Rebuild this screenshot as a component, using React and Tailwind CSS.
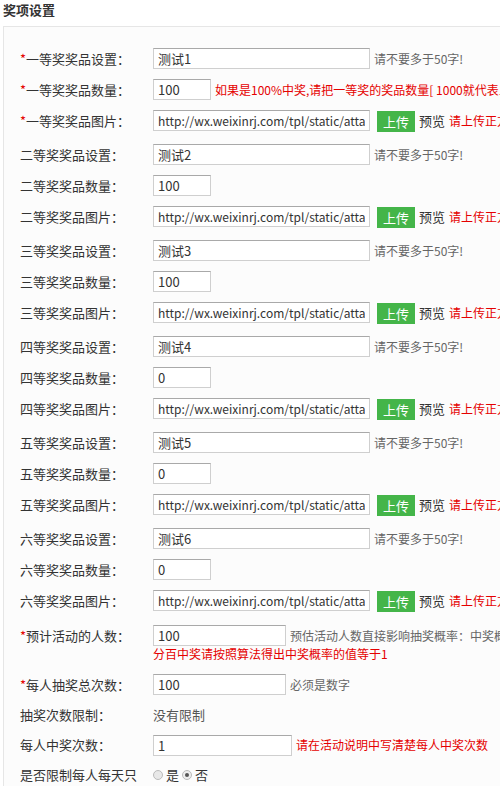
import React from "react";

const FONT = { fontFamily: '"Noto Sans CJK SC", "Open Sans", sans-serif' };

function Label({ req, children }) {
  return (
    <div className="w-[149px] shrink-0 pl-[16px] text-[13px] text-[#333] whitespace-nowrap">
      {req && <span className="text-[#e50000]">*</span>}
      {children}
    </div>
  );
}

function TextInput({ value, w }) {
  return (
    <input
      readOnly
      value={value}
      className={`${w} h-[21px] shrink-0 border border-[#cfcfcf] border-t-[#a9a9a9] bg-white px-[4px] text-[13px] text-[#333] outline-none`}
      style={FONT}
    />
  );
}

function Row({ children, h = "h-[31px]", extra = "" }) {
  return <div className={`flex items-center ${h} ${extra}`}>{children}</div>;
}

const prizes = [
  { n: "一", name: "测试1", count: "100", req: true },
  { n: "二", name: "测试2", count: "100" },
  { n: "三", name: "测试3", count: "100" },
  { n: "四", name: "测试4", count: "0" },
  { n: "五", name: "测试5", count: "0" },
  { n: "六", name: "测试6", count: "0" },
];

const URL = "http://wx.weixinrj.com/tpl/static/attachment/images/prize.jpg";

export default function App() {
  return (
    <div className="w-[500px] h-[786px] overflow-hidden bg-white" style={FONT}>
      <div className="h-[26px] pl-[3px] pt-[1px] text-[13px] font-bold text-[#333] leading-[18px]">
        奖项设置
      </div>
      <div className="ml-[3px] w-[520px] border border-[#e6e6e6] bg-[#fcfcfc] pt-[16px] pb-[40px]">
        {prizes.map((p) => (
          <React.Fragment key={p.n}>
            <Row>
              <Label req={p.req}>{p.n}等奖奖品设置：</Label>
              <TextInput value={p.name} w="w-[217px]" />
              <span className="ml-[4px] text-[12px] text-[#666] whitespace-nowrap">请不要多于50字!</span>
            </Row>
            <Row>
              <Label req={p.req}>{p.n}等奖奖品数量：</Label>
              <TextInput value={p.count} w="w-[58px]" />
              {p.req && (
                <span className="ml-[4px] text-[12px] text-[#e50000] whitespace-nowrap">
                  如果是100%中奖,请把一等奖的奖品数量[ 1000就代表100%中奖 ]
                </span>
              )}
            </Row>
            <Row extra="mb-[3px]">
              <Label req={p.req}>{p.n}等奖奖品图片：</Label>
              <input
                readOnly
                value={URL}
                className="w-[217px] h-[21px] shrink-0 border border-[#cfcfcf] border-t-[#a9a9a9] bg-white px-[4px] text-[12px] text-[#333] outline-none"
                style={FONT}
              />
              <span className="ml-[7px] mt-[2px] h-[21px] w-[38px] shrink-0 bg-[#44b549] text-center text-[13px] leading-[21px] text-white">
                上传
              </span>
              <span className="ml-[4px] text-[13px] text-[#333] whitespace-nowrap">预览</span>
              <span className="ml-[4px] text-[12px] text-[#e50000] whitespace-nowrap">请上传正方形图片</span>
            </Row>
          </React.Fragment>
        ))}
        <div className="flex h-[50px] pt-[6px]">
          <div className="pt-[1px]">
            <Label req>预计活动的人数：</Label>
          </div>
          <div className="flex flex-col">
            <div className="flex items-center">
              <TextInput value="100" w="w-[133px]" />
              <span className="ml-[4px] text-[12px] text-[#666] whitespace-nowrap">
                预估活动人数直接影响抽奖概率：中奖概率 = 奖品总数/(预估活动人数*每人抽奖次数) 如果要百
              </span>
            </div>
            <div className="text-[12px] leading-[16px] text-[#e50000] whitespace-nowrap">
              分百中奖请按照算法得出中奖概率的值等于1
            </div>
          </div>
        </div>
        <Row h="h-[31px]">
          <Label req>每人抽奖总次数：</Label>
          <TextInput value="100" w="w-[133px]" />
          <span className="ml-[4px] text-[12px] text-[#666] whitespace-nowrap">必须是数字</span>
        </Row>
        <Row h="h-[30px]">
          <Label>抽奖次数限制：</Label>
          <span className="text-[13px] text-[#555]">没有限制</span>
        </Row>
        <Row h="h-[30px]">
          <Label>每人中奖次数：</Label>
          <TextInput value="1" w="w-[139px]" />
          <span className="ml-[4px] text-[12px] text-[#e50000] whitespace-nowrap">请在活动说明中写清楚每人中奖次数</span>
        </Row>
        <Row h="h-[30px]">
          <Label>是否限制每人每天只</Label>
          <span className="flex items-center text-[13px] text-[#333]">
            <span className="mr-[3px] inline-block h-[10px] w-[10px] rounded-full border border-[#bbb] bg-[#e8e8e8]" />
            是
            <span className="ml-[3px] mr-[3px] inline-flex h-[10px] w-[10px] items-center justify-center rounded-full border border-[#bbb] bg-[#eee]">
              <span className="h-[4px] w-[4px] rounded-full bg-[#555]" />
            </span>
            否
          </span>
        </Row>
      </div>
    </div>
  );
}
